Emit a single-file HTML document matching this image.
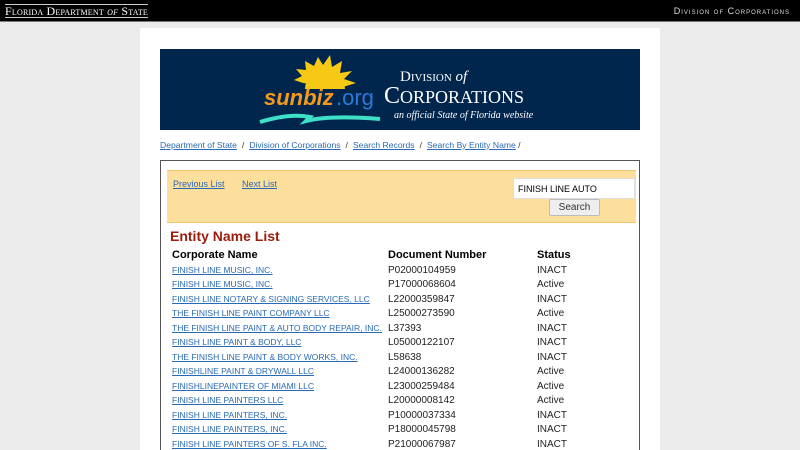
<!DOCTYPE html>
<html><head><style>
*{margin:0;padding:0;box-sizing:border-box}
html,body{width:800px;height:450px;overflow:hidden}
body{background:#ebebeb;font-family:"Liberation Sans",sans-serif;position:relative}
#top{position:absolute;left:0;top:0;width:800px;height:22px;background:#000;border-bottom:1px solid #777}
#top .l{position:absolute;left:5px;top:4px;color:#fff;font-family:"Liberation Serif",serif;font-size:12px;border-top:1px solid #ccc;border-bottom:1px solid #ccc;line-height:12px;font-variant:small-caps;letter-spacing:0.2px}
#top .r{position:absolute;right:10px;top:6px;color:#ddd;font-size:9px;font-variant:small-caps;letter-spacing:1px}
#main{position:absolute;left:140px;top:28px;width:520px;height:430px;background:#fff}
#banner{position:absolute;left:160px;top:49px;width:480px;height:81px;background:#00264d}
#crumb{position:absolute;left:160px;top:140px;font-size:8.6px;color:#333}
a{color:#2a6ab5;text-decoration:underline}
#crumb span{margin:0 5px}
#box{position:absolute;left:160px;top:160px;width:480px;height:300px;border:1px solid #555;border-bottom:none}
#yel{position:absolute;left:6px;top:9px;width:469px;height:53px;background:#fddf9d;border-top:1px solid #f5c870;border-bottom:1px solid #f5c870}
#yel a{position:absolute;top:8px;font-size:9px}
#inp{position:absolute;left:346px;top:7px;width:122px;height:21px;background:#fff;border:1px solid #ddd;border-radius:2px;font-size:9px;padding:5px 4px}
#btn{position:absolute;left:382px;top:28px;width:51px;height:17px;background:#eee;border:1px solid #bbb;border-radius:2px;font-size:10px;text-align:center;line-height:15px;color:#333}
h2{position:absolute;left:9px;top:67px;color:#9b1c0c;font-size:14px;font-weight:bold}
table{position:absolute;left:9px;top:86px;border-collapse:collapse;font-size:10px}
th{text-align:left;font-size:11px;height:16px;padding:0 0 0 2px}
td{height:14.5px;padding:0 0 0 2px;font-size:10px;color:#222}
td a{font-size:8.5px}
</style></head><body>
<div id="top"><div class="l">Florida Department <i>of</i> State</div><div class="r">Division of Corporations</div></div>
<div id="main"></div>
<div id="banner">
<svg width="480" height="81">
<g fill="#f6c915">
<path d="M145 40 A20 20 0 0 1 185 40 Z"/>
<path d="M143 34 L134 31 L142 27 L136 20 L146 21 L145 12 L154 17 L158 8 L163 16 L170 6 L172 18 L182 12 L180 24 L192 22 L184 30 L196 34 L183 38 Z"/>
</g>
<text x="104" y="56" fill="#f39a1c" font-family="Liberation Sans" font-style="italic" font-weight="bold" font-size="22">sunbiz</text>
<text x="176" y="56" fill="#2a7bd8" font-family="Liberation Sans" font-size="22">.org</text>
<path d="M100 73 Q130 64 150 68 L146 72 Q170 66 220 70" stroke="#3fe0c8" stroke-width="4" fill="none"/>
<text x="240" y="32" fill="#fff" font-family="Liberation Serif" font-size="15">D<tspan font-size="11">IVISION</tspan> <tspan font-style="italic">of</tspan></text>
<text x="224" y="54" fill="#fff" font-family="Liberation Serif" font-size="24">C<tspan font-size="18">ORPORATIONS</tspan></text>
<text x="234" y="69" fill="#fff" font-family="Liberation Serif" font-style="italic" font-size="10">an official State of Florida website</text>
</svg></div>
<div id="crumb"><a>Department of State</a><span>/</span><a>Division of Corporations</a><span>/</span><a>Search Records</a><span>/</span><a>Search By Entity Name</a> /</div>
<div id="box">
<div id="yel"><a style="left:6px">Previous List</a><a style="left:75px">Next List</a><div id="inp">FINISH LINE AUTO</div><div id="btn">Search</div></div>
<h2>Entity Name List</h2>
<table>
<tr><th style="width:216px">Corporate Name</th><th style="width:149px">Document Number</th><th>Status</th></tr>
<tr><td><a>FINISH LINE MUSIC, INC.</a></td><td>P02000104959</td><td>INACT</td></tr>
<tr><td><a>FINISH LINE MUSIC, INC.</a></td><td>P17000068604</td><td>Active</td></tr>
<tr><td><a>FINISH LINE NOTARY &amp; SIGNING SERVICES, LLC</a></td><td>L22000359847</td><td>INACT</td></tr>
<tr><td><a>THE FINISH LINE PAINT COMPANY LLC</a></td><td>L25000273590</td><td>Active</td></tr>
<tr><td><a>THE FINISH LINE PAINT &amp; AUTO BODY REPAIR, INC.</a></td><td>L37393</td><td>INACT</td></tr>
<tr><td><a>FINISH LINE PAINT &amp; BODY, LLC</a></td><td>L05000122107</td><td>INACT</td></tr>
<tr><td><a>THE FINISH LINE PAINT &amp; BODY WORKS, INC.</a></td><td>L58638</td><td>INACT</td></tr>
<tr><td><a>FINISHLINE PAINT &amp; DRYWALL LLC</a></td><td>L24000136282</td><td>Active</td></tr>
<tr><td><a>FINISHLINEPAINTER OF MIAMI LLC</a></td><td>L23000259484</td><td>Active</td></tr>
<tr><td><a>FINISH LINE PAINTERS LLC</a></td><td>L20000008142</td><td>Active</td></tr>
<tr><td><a>FINISH LINE PAINTERS, INC.</a></td><td>P10000037334</td><td>INACT</td></tr>
<tr><td><a>FINISH LINE PAINTERS, INC.</a></td><td>P18000045798</td><td>INACT</td></tr>
<tr><td><a>FINISH LINE PAINTERS OF S. FLA INC.</a></td><td>P21000067987</td><td>INACT</td></tr>
</table>
</div>
</body></html>
